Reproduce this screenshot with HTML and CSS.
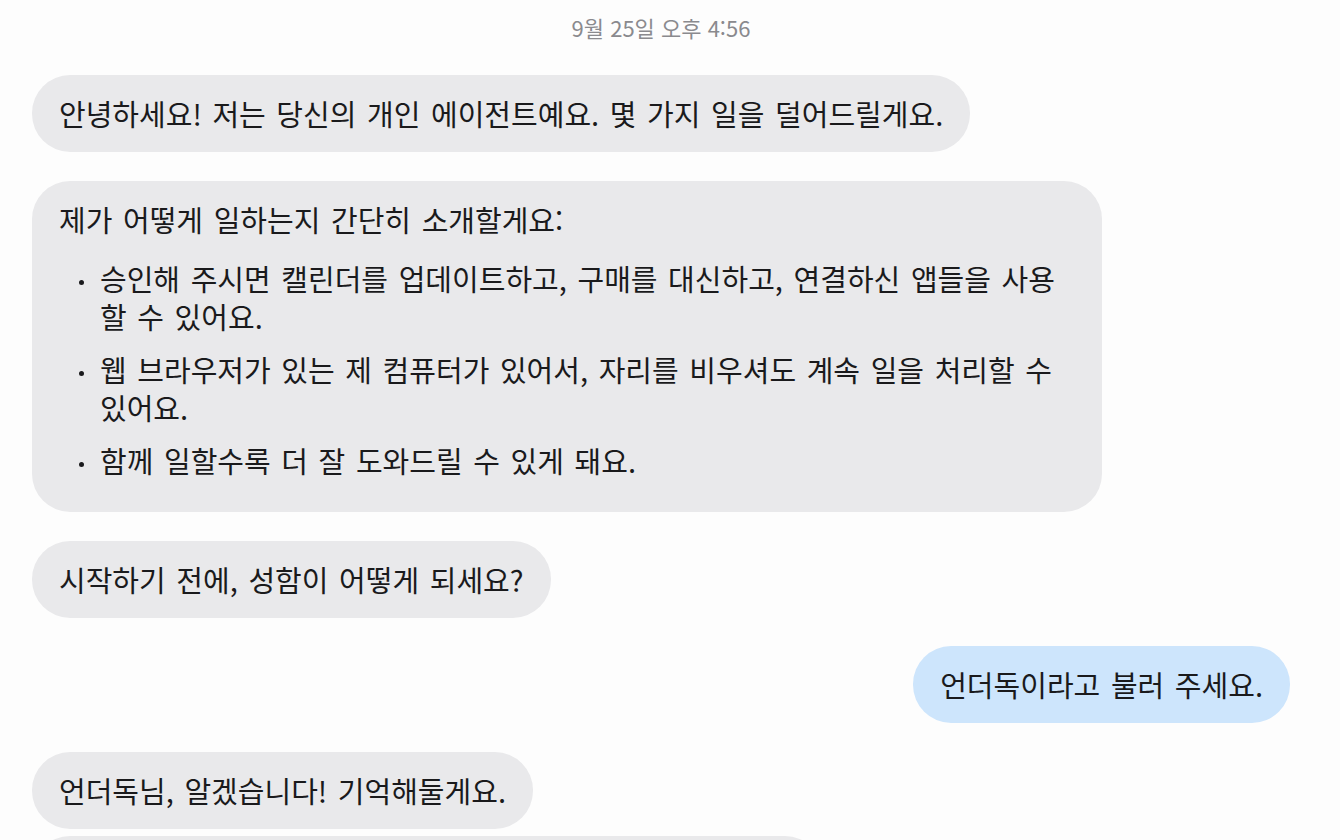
FILE: index.html
```html
<!DOCTYPE html>
<html lang="ko">
<head>
<meta charset="utf-8">
<link rel="stylesheet" href="styles.css">
</head>
<body>
<div class="chat">
  <div class="stamp">9월 25일 오후 4:56</div>
  <div class="row">
    <div class="bubble">안녕하세요! 저는 당신의 개인 에이전트예요. 몇 가지 일을 덜어드릴게요.</div>
  </div>
  <div class="row">
    <div class="bubble">
      <p class="lead">제가 어떻게 일하는지 간단히 소개할게요:</p>
      <ul class="list">
        <li>승인해 주시면 캘린더를 업데이트하고, 구매를 대신하고, 연결하신 앱들을 사용할 수 있어요.</li>
        <li>웹 브라우저가 있는 제 컴퓨터가 있어서, 자리를 비우셔도 계속 일을 처리할 수 있어요.</li>
        <li>함께 일할수록 더 잘 도와드릴 수 있게 돼요.</li>
      </ul>
    </div>
  </div>
  <div class="row">
    <div class="bubble">시작하기 전에, 성함이 어떻게 되세요?</div>
  </div>
  <div class="row me">
    <div class="bubble user">언더독이라고 불러 주세요.</div>
  </div>
  <div class="row">
    <div class="bubble">언더독님, 알겠습니다! 기억해둘게요.</div>
  </div>
  <div class="row cont">
    <div class="bubble">어떤 일부터 먼저 도와드릴까요? 편안하게 말씀만 해 주세요.</div>
  </div>
</div>
</body>
</html>
```

FILE: styles.css
```css
html, body {
  margin: 0;
  padding: 0;
  height: 100%;
  overflow: hidden;
  background: #fdfdfd;
}
body {
  font-family: "Noto Sans CJK KR", "Noto Sans", sans-serif;
  color: #1a1a1c;
}
.chat {
  display: flex;
  flex-direction: column;
  padding: 13px 50px 0 32px;
}
.stamp {
  text-align: center;
  font-size: 22px;
  line-height: 28px;
  color: #8a8a8e;
  margin-bottom: 34px;
}
.row {
  display: flex;
  margin-bottom: 29px;
}
.row.me {
  justify-content: flex-end;
  margin-top: -1px;
}
.row.cont {
  margin-top: -22px;
}
.bubble {
  background: #e9e9eb;
  border-radius: 38px;
  padding: 19px 27px 20px;
  font-size: 29px;
  line-height: 38px;
  max-width: 1016px;
  word-spacing: 2.5px;
}
.bubble.user {
  background: #cde5fc;
}
.lead {
  margin: 0;
}
.list {
  list-style: none;
  margin: 21px 0 13px;
  padding: 0 0 0 41px;
}
.list li {
  position: relative;
  margin-bottom: 15px;
}
.list li:last-child {
  margin-bottom: 0;
}
.list li::before {
  content: "";
  position: absolute;
  left: -21px;
  top: 21px;
  width: 5px;
  height: 5px;
  border-radius: 50%;
  background: #1a1a1c;
}
```
